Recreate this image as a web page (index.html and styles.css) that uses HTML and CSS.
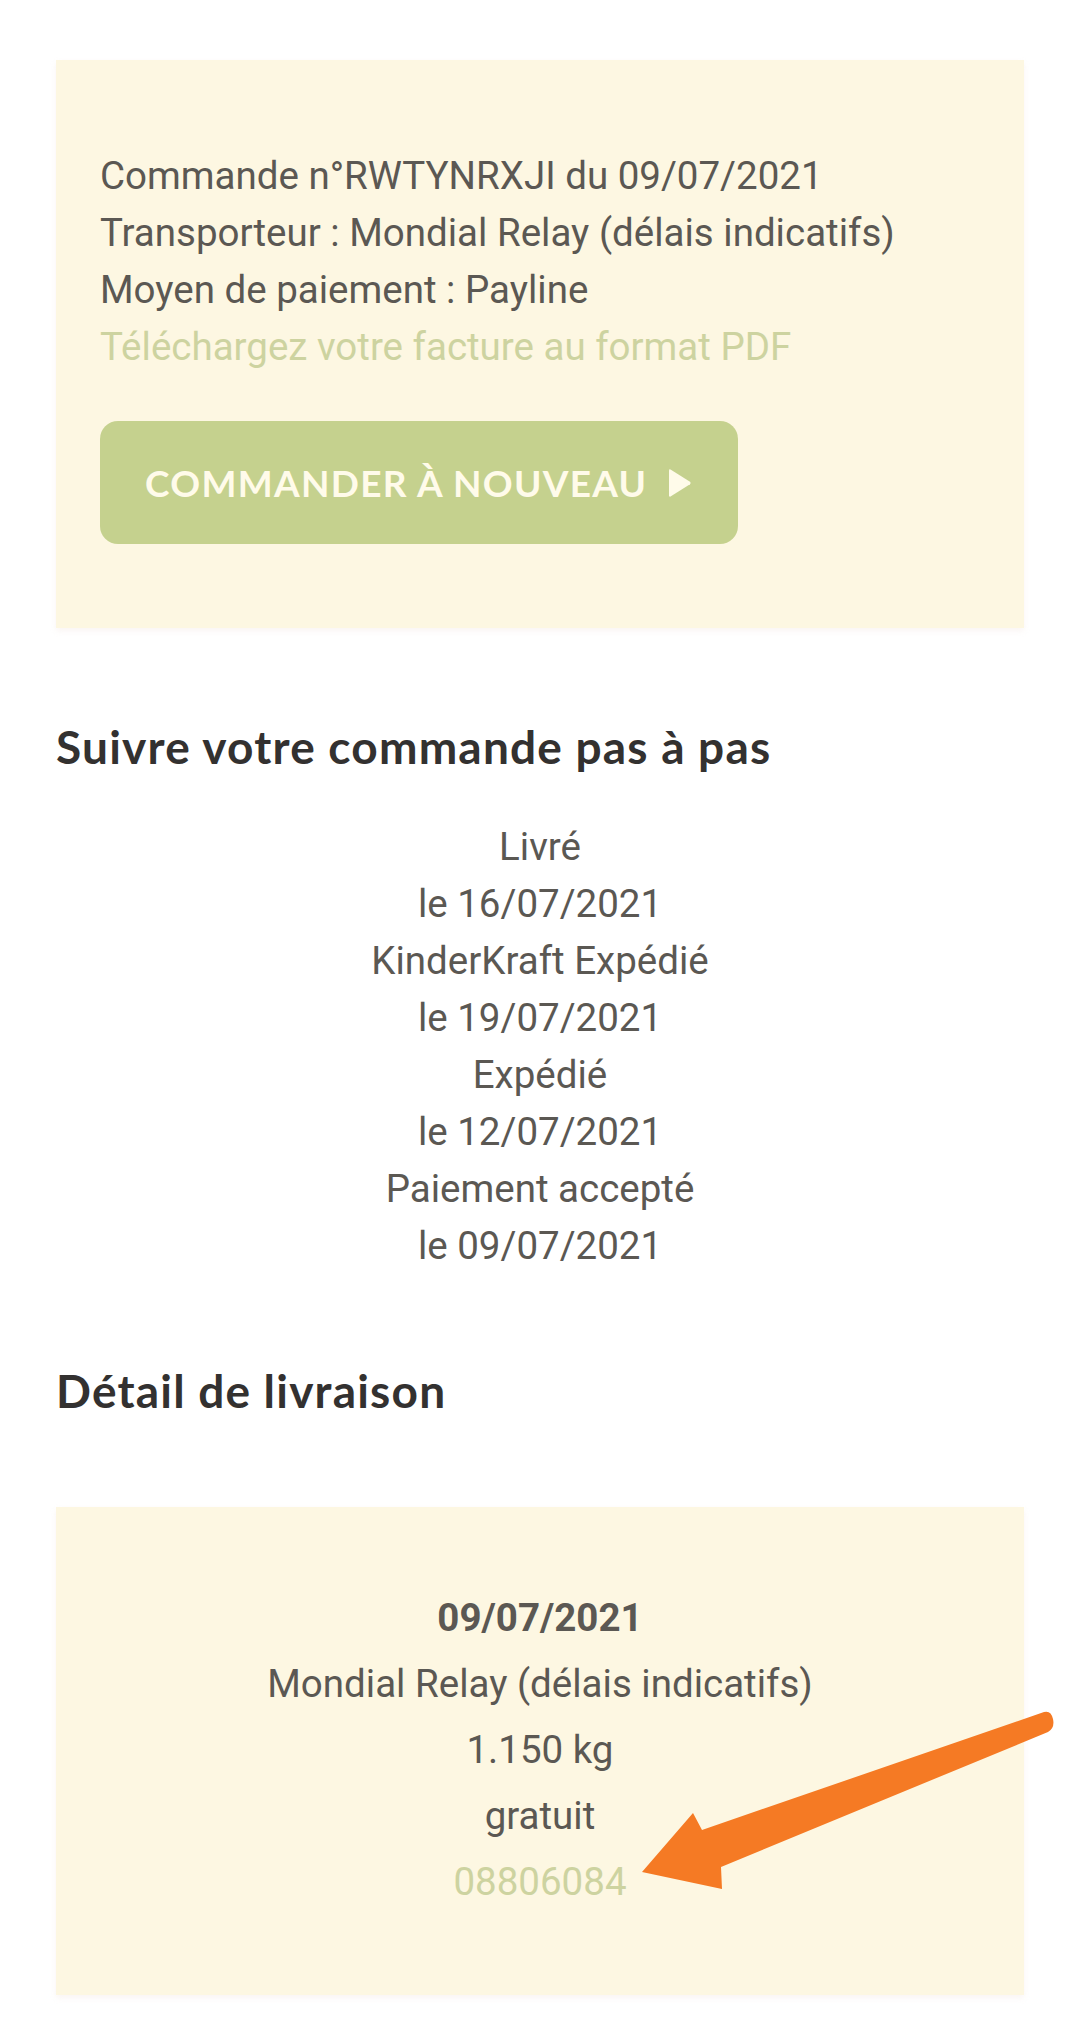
FILE: index.html
```html
<!DOCTYPE html>
<html lang="fr">
<head>
<meta charset="utf-8">
<title>Commande</title>
<link rel="stylesheet" href="styles.css">
</head>
<body>
<main class="page">
  <section class="card order">
    <p class="line">Commande n°RWTYNRXJI du 09/07/2021</p>
    <p class="line">Transporteur : Mondial Relay (délais indicatifs)</p>
    <p class="line">Moyen de paiement : Payline</p>
    <a class="line link" href="#">Téléchargez votre facture au format PDF</a>
    <button class="btn" type="button">COMMANDER À NOUVEAU<svg class="btn-icon" viewBox="0 0 24 30" width="24" height="30"><path d="M2.5 1.5 Q1 0.8 1 2.8 L1 27.2 Q1 29.2 2.5 28.5 L22 16.2 Q23.5 15 22 13.8 Z" fill="currentColor"/></svg></button>
  </section>

  <h2 class="title">Suivre votre commande pas à pas</h2>
  <ul class="steps">
    <li class="step"><span>Livré</span><span>le 16/07/2021</span></li>
    <li class="step"><span>KinderKraft Expédié</span><span>le 19/07/2021</span></li>
    <li class="step"><span>Expédié</span><span>le 12/07/2021</span></li>
    <li class="step"><span>Paiement accepté</span><span>le 09/07/2021</span></li>
  </ul>

  <h2 class="title title-second">Détail de livraison</h2>
  <section class="card delivery">
    <p class="dline strong">09/07/2021</p>
    <p class="dline">Mondial Relay (délais indicatifs)</p>
    <p class="dline">1.150 kg</p>
    <p class="dline">gratuit</p>
    <a class="dline link" href="#">08806084</a>
  </section>

  <svg class="arrow" viewBox="0 0 420 190" width="420" height="190">
    <path d="M2 167 L53 108 L62 125 L404 7 Q411 5 413 14 Q415 23 408 27 L81 162 L82 184 Z" fill="#f57a24"/>
  </svg>
</main>
</body>
</html>
```
FILE: styles.css
```css
* { box-sizing: border-box; }
html, body { margin: 0; padding: 0; background: #ffffff; }
body {
  font-family: Roboto, "Liberation Sans", Arial, sans-serif;
  color: #5b5853;
  width: 1080px;
}
.page {
  position: relative;
  padding: 60px 56px 28px;
}
.card {
  background: #fdf7e2;
  box-shadow: 0 3px 6px rgba(230, 200, 190, 0.18);
}
.order {
  padding: 87px 44px 84px;
  display: flex;
  flex-direction: column;
  align-items: flex-start;
}
.line {
  margin: 0;
  font-size: 38.5px;
  line-height: 57px;
  display: block;
}
.link {
  color: #cdd3a0;
  text-decoration: none;
}
.btn {
  margin-top: 46px;
  height: 123px;
  padding: 0 46px 0 45px;
  border: none;
  border-radius: 18px;
  background: #c5d18e;
  color: #fffbea;
  font-family: Lato, "Open Sans", sans-serif;
  font-weight: 700;
  font-size: 37px;
  letter-spacing: 1.3px;
  display: flex;
  align-items: center;
  gap: 21px;
}
.btn-icon { display: block; }
.title {
  margin: 91px 0 0;
  font-family: Lato, "Open Sans", sans-serif;
  font-weight: 700;
  font-size: 46px;
  letter-spacing: 1.2px;
  line-height: 56px;
  color: #333130;
}
.steps {
  list-style: none;
  margin: 43px 0 0;
  padding: 0;
  text-align: center;
}
.step {
  display: flex;
  flex-direction: column;
  font-size: 38.5px;
  line-height: 57px;
}
.title-second { margin-top: 89px; }
.delivery {
  margin-top: 88px;
  padding: 78px 40px 80px;
  display: flex;
  flex-direction: column;
  align-items: center;
}
.dline {
  margin: 0;
  font-size: 38.5px;
  line-height: 66px;
  display: block;
}
.strong {
  font-weight: 700;
}
.arrow {
  position: absolute;
  left: 640px;
  top: 1705px;
}
```
